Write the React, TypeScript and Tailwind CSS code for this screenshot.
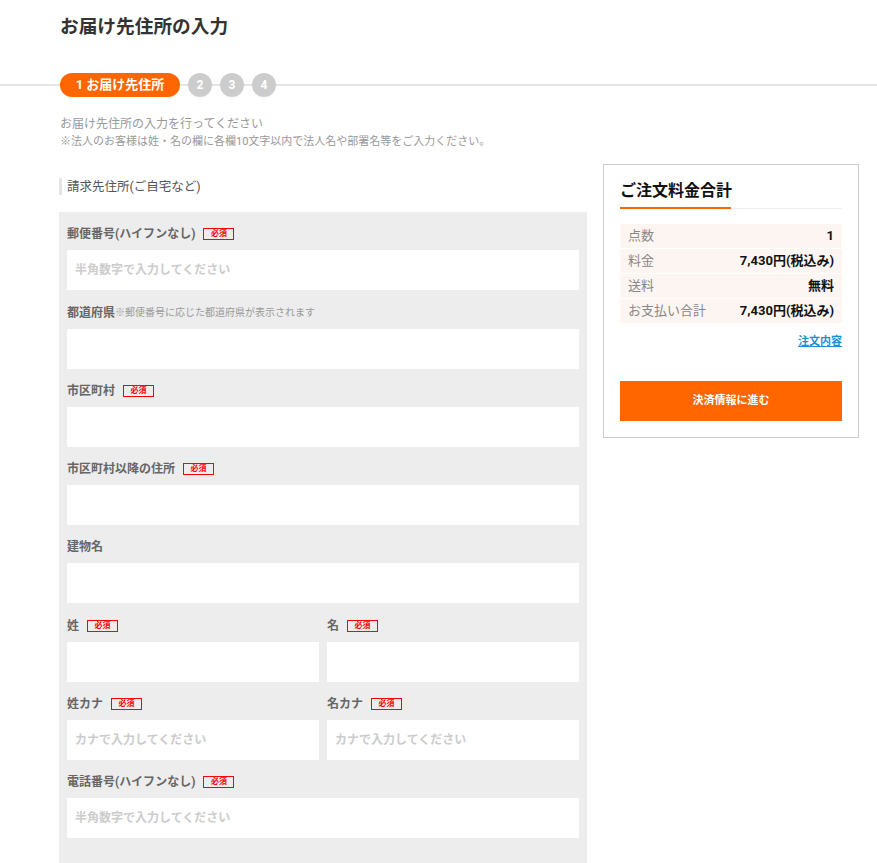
const font = "font-['Roboto','Noto_Sans_CJK_JP',sans-serif]";

const Required = () => (
  <span className="ml-2 inline-flex h-[12px] w-[31px] items-center justify-center border border-[#ff0000] text-[8px] font-bold leading-[10px] text-[#ff0000]">
    必須
  </span>
);

type FieldProps = {
  label: string;
  note?: string;
  required?: boolean;
  placeholder?: string;
};

const Field = ({ label, note, required, placeholder }: FieldProps) => (
  <div className="flex flex-col pt-[14.3px]">
    <div className="flex h-[16px] items-center">
      <span className="text-[12px] font-bold leading-[16px] text-[#666]">{label}</span>
      {note && <span className="text-[10px] leading-[16px] text-[#999]">{note}</span>}
      {required && <Required />}
    </div>
    <input
      className="mt-[8px] h-[40px] w-full bg-white px-2 text-[12px] font-bold text-[#333] outline-none placeholder:text-[#ccc]"
      placeholder={placeholder}
    />
  </div>
);

const Step = ({ n }: { n: number }) => (
  <span className="flex h-6 w-6 items-center justify-center rounded-full bg-[#cccccc] text-[12px] font-bold text-white">
    {n}
  </span>
);

const Line = ({ className }: { className: string }) => (
  <span className={`h-[2px] bg-[#e5e5e5] ${className}`} />
);

const rows = [
  { label: "点数", value: "1" },
  { label: "料金", value: "7,430円(税込み)" },
  { label: "送料", value: "無料" },
  { label: "お支払い合計", value: "7,430円(税込み)" },
];

export default function App() {
  return (
    <div className={`min-h-[863px] bg-white ${font}`}>
      <h1 className="pl-[60px] pt-[16px] text-[18.7px] font-bold leading-[22px] text-[#333]">
        お届け先住所の入力
      </h1>

      <div className="mt-[35px] flex items-center">
        <Line className="w-[60px]" />
        <span className="flex h-6 w-[120px] items-center justify-center rounded-full bg-[#ff6600] text-[13px] font-bold text-white">
          1 お届け先住所
        </span>
        <Line className="w-[8px]" />
        <Step n={2} />
        <Line className="w-[8px]" />
        <Step n={3} />
        <Line className="w-[8px]" />
        <Step n={4} />
        <Line className="flex-1" />
      </div>

      <div className="pl-[60px]">
        <p className="mt-[18px] text-[12px] leading-[18px] text-[#999]">お届け先住所の入力を行ってください</p>
        <p className="mt-[2px] text-[11px] leading-[14px] text-[#999]">
          ※法人のお客様は姓・名の欄に各欄10文字以内で法人名や部署名等をご入力ください。
        </p>
      </div>

      <div className="mt-[15px] flex items-start gap-4 pl-[59px]">
        <div className="flex w-[528px] flex-col">
          <h2 className="mt-[14px] border-l-[3px] border-[#e5e5e5] pl-[5px] text-[12.5px] leading-[17px] text-[#555]">
            請求先住所(ご自宅など)
          </h2>
          <div className="mt-[17px] flex flex-col bg-[#ededed] px-2 pb-[40px]">
            <Field label="郵便番号(ハイフンなし)" required placeholder="半角数字で入力してください" />
            <Field label="都道府県" note="※郵便番号に応じた都道府県が表示されます" />
            <Field label="市区町村" required />
            <Field label="市区町村以降の住所" required />
            <Field label="建物名" />
            <div className="grid grid-cols-2 gap-2">
              <Field label="姓" required />
              <Field label="名" required />
            </div>
            <div className="grid grid-cols-2 gap-2">
              <Field label="姓カナ" required placeholder="カナで入力してください" />
              <Field label="名カナ" required placeholder="カナで入力してください" />
            </div>
            <Field label="電話番号(ハイフンなし)" required placeholder="半角数字で入力してください" />
          </div>
        </div>

        <div className="flex w-[256px] flex-col border border-[#cccccc] p-4">
          <h3 className="pb-[6px] text-[16px] font-bold leading-[20px] text-[#111]">ご注文料金合計</h3>
          <div className="flex">
            <span className="h-[2px] w-[111px] bg-[#ff6600]" />
            <span className="mt-[1px] h-[1px] flex-1 bg-[#eeeeee]" />
          </div>
          <div className="mt-[15px] flex flex-col">
            {rows.map((r) => (
              <div
                key={r.label}
                className="flex h-[25px] items-center justify-between border-b border-white bg-[#fdf5f1] px-2 text-[13px]"
              >
                <span className="text-[#888]">{r.label}</span>
                <span className="font-bold text-[#111]">{r.value}</span>
              </div>
            ))}
          </div>
          <a className="mt-[10px] self-end text-[11px] font-bold leading-[16px] text-[#1b8fd6] underline">
            注文内容
          </a>
          <button className="mt-[31px] h-[40px] w-full bg-[#ff6600] text-[11px] font-bold text-white">
            決済情報に進む
          </button>
        </div>
      </div>
    </div>
  );
}
